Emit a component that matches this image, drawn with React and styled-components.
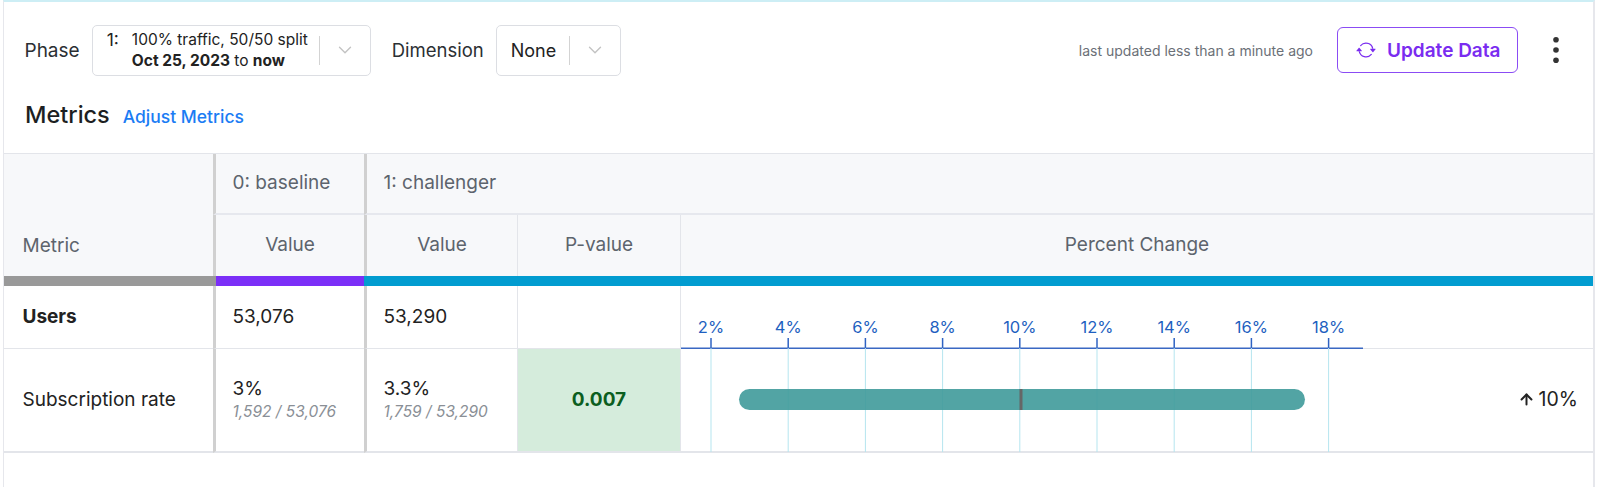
import React from "react";
import styled, { createGlobalStyle } from "styled-components";
import { ChevronDown, ArrowUp } from "lucide-react";
import { BsArrowRepeat } from "react-icons/bs";

const GlobalStyle = createGlobalStyle`
  * { box-sizing: border-box; }
  body {
    margin: 0;
    background: #fff;
    font-family: Inter, "Noto Sans", sans-serif;
    color: #222;
  }
`;

const Page = styled.div`
  padding-left: 3px;
  width: 1600px;
  height: 487px;
  overflow: hidden;
`;

const Card = styled.div`
  width: 1592px;
  height: 487px;
  border-left: 1px solid #e6e7ec;
  border-right: 2px solid #e6e7ec;
  border-top: 2px solid #cdeef5;
  background: #fff;
`;

const Toolbar = styled.div`
  display: flex;
  align-items: center;
  padding: 22.5px 0 0 20.5px;
  height: 74px;
`;

const Label = styled.span`
  font-size: ${(p) => p.$size || 19}px;
  color: #2b2f33;
  margin-right: 12px;
`;

const Select = styled.div`
  display: flex;
  align-items: center;
  height: 51px;
  width: ${(p) => p.$w}px;
  border: 1px solid #dcdee3;
  border-radius: 5px;
  padding-left: 14px;
  margin-right: ${(p) => p.$mr || 0}px;
`;

const SelectValue = styled.div`
  flex: 1;
  display: flex;
  align-items: ${(p) => (p.$top ? "flex-start" : "center")};
  font-size: 18px;
  color: #222;
`;

const PhaseNum = styled.span`
  font-size: 17.5px;
  margin-right: 13px;
  line-height: 21px;
`;

const PhaseLines = styled.div`
  display: flex;
  flex-direction: column;
  font-size: 15.5px;
  line-height: 21px;
  color: #222;
  white-space: nowrap;
  b { font-weight: 700; }
`;

const Sep = styled.div`
  width: 1px;
  height: 29px;
  background: #d3d3d3;
`;

const Chevron = styled.div`
  width: 50px;
  display: flex;
  justify-content: center;
  color: #c3c3c3;
`;

const Right = styled.div`
  margin-left: auto;
  display: flex;
  align-items: center;
  padding-right: 33px;
`;

const Updated = styled.span`
  font-size: 14px;
  color: #6b7077;
  margin-right: 24px;
`;

const UpdateButton = styled.button`
  display: flex;
  align-items: center;
  gap: 11px;
  height: 46px;
  width: 181px;
  padding: 0 0 0 18px;
  border: 1.5px solid #8b4cf4;
  border-radius: 6px;
  background: #fff;
  color: #7a2cf0;
  font-family: Inter, sans-serif;
  font-size: 19px;
  font-weight: 600;
  white-space: nowrap;
  cursor: pointer;
`;

const Kebab = styled.div`
  margin-left: 34px;
  display: flex;
  align-items: center;
`;

const MetricsHead = styled.div`
  display: flex;
  align-items: baseline;
  gap: 13px;
  padding: 24px 0 0 21px;
  height: 76.5px;
`;

const Title = styled.h2`
  margin: 0;
  font-size: 23.5px;
  line-height: 30px;
  font-weight: 500;
  color: #1d1f22;
`;

const LinkText = styled.a`
  font-size: 17.5px;
  color: #1b7cf4;
  font-weight: 500;
  text-decoration: none;
`;

const Table = styled.div`
  display: grid;
  grid-template-columns: 209px 151px 153px 163px 1fr;
  grid-template-rows: 61px 61.5px 9.5px 63px 104px;
  border-top: 1px solid #e3e5ea;
`;

const Th = styled.div`
  background: #f7f8fa;
  color: #5d646d;
  font-size: 19px;
  line-height: 24px;
  display: flex;
  align-items: ${(p) => (p.$bottom ? "flex-end" : "center")};
  justify-content: ${(p) => (p.$center ? "center" : "flex-start")};
  padding: ${(p) => (p.$bottom ? "0 0 18px 18.5px" : p.$center ? "0" : "0 0 0 16.5px")};
  grid-column: ${(p) => p.$col || "auto"};
  grid-row: ${(p) => p.$row || "auto"};
  border-left: ${(p) => (p.$thick ? "3px solid #d0d0d0" : p.$thin ? "1px solid #e3e5ea" : "none")};
  border-bottom: ${(p) => (p.$rule ? "2px solid #e6e8ee" : "none")};
`;

const ColorCell = styled.div`
  background: ${(p) => p.$c};
  grid-column: ${(p) => p.$col || "auto"};
  border-left: ${(p) => (p.$edge ? `3px solid ${p.$edge}` : "none")};
`;

const Td = styled.div`
  display: flex;
  flex-direction: column;
  justify-content: center;
  align-items: ${(p) => (p.$center ? "center" : "flex-start")};
  padding: ${(p) => (p.$center || p.$chart ? "0" : `0 0 0 ${p.$pl || 16.5}px`)};
  font-size: 19px;
  line-height: 23px;
  color: #222;
  font-weight: ${(p) => (p.$bold ? 700 : 400)};
  border-left: ${(p) => (p.$thick ? "3px solid #d0d0d0" : p.$thin ? "1px solid #e3e5ea" : "none")};
  border-bottom: ${(p) => p.$bb || 1}px solid #e3e5ea;
  background: ${(p) => p.$bg || "transparent"};
  position: relative;
`;

const Sub = styled.span`
  font-size: 15.5px;
  line-height: 20px;
  font-style: italic;
  color: #8a8f96;
  margin-top: 2px;
`;

const PValue = styled.span`
  font-size: 19px;
  font-weight: 700;
  color: #0c5e1f;
`;

const ChartRow = styled.div`
  display: flex;
  align-items: center;
  height: 100%;
  width: 100%;
`;

const Change = styled.div`
  margin-left: auto;
  padding-right: 15px;
  display: flex;
  align-items: center;
  gap: 4px;
  font-size: 19.5px;
  color: #222;
`;

const ticks = [2, 4, 6, 8, 10, 12, 14, 16, 18];
const x = (p) => 30 + (p - 2) * 38.6;

function Axis() {
  return (
    <svg width="683" height="63" style={{ display: "block", position: "absolute", left: 0, bottom: -1 }}>
      {ticks.map((t) => (
        <g key={t}>
          <text
            x={x(t)}
            y={47}
            textAnchor="middle"
            fontSize="16.5"
            fontFamily="Inter, sans-serif"
            fill="#1e5fc0"
          >
            {t}%
          </text>
          <line x1={x(t)} x2={x(t)} y1={52} y2={63} stroke="#2f63c3" strokeWidth="1.5" />
        </g>
      ))}
      <line x1={0} x2={682} y1={62.3} y2={62.3} stroke="#3a68c3" strokeWidth="1.4" />
    </svg>
  );
}

function Bar() {
  return (
    <svg width="683" height="104" style={{ display: "block", flexShrink: 0 }}>
      {ticks.map((t) => (
        <line key={t} x1={x(t)} x2={x(t)} y1={0} y2={104} stroke="#b5e5ef" strokeWidth="1" />
      ))}
      <rect x={58} y={41} width={566} height={21} rx={10.5} fill="#3f9a9a" fillOpacity="0.9" />
      <rect x={338.5} y={41} width={3} height={21} fill="#666" />
    </svg>
  );
}

export default function App() {
  return (
    <>
      <GlobalStyle />
      <Page>
        <Card>
          <Toolbar>
            <Label>Phase</Label>
            <Select $w={279} $mr={21}>
              <SelectValue $top>
                <PhaseNum>1:</PhaseNum>
                <PhaseLines>
                  <span>100% traffic, 50/50 split</span>
                  <span>
                    <b>Oct 25, 2023</b> to <b>now</b>
                  </span>
                </PhaseLines>
              </SelectValue>
              <Sep />
              <Chevron>
                <ChevronDown size={22} strokeWidth={1.5} />
              </Chevron>
            </Select>
            <Label $size={18.5}>Dimension</Label>
            <Select $w={125}>
              <SelectValue>None</SelectValue>
              <Sep />
              <Chevron>
                <ChevronDown size={22} strokeWidth={1.5} />
              </Chevron>
            </Select>
            <Right>
              <Updated>last updated less than a minute ago</Updated>
              <UpdateButton>
                <BsArrowRepeat size={20} />
                Update Data
              </UpdateButton>
              <Kebab>
                <svg width="8" height="28" viewBox="0 0 8 28">
                  <circle cx="4" cy="3.8" r="2.8" fill="#333" />
                  <circle cx="4" cy="14" r="2.8" fill="#333" />
                  <circle cx="4" cy="24.2" r="2.8" fill="#333" />
                </svg>
              </Kebab>
            </Right>
          </Toolbar>
          <MetricsHead>
            <Title>Metrics</Title>
            <LinkText href="#">Adjust Metrics</LinkText>
          </MetricsHead>
          <Table>
            <Th $bottom $col="1" $row="1 / span 2">Metric</Th>
            <Th $col="2" $row="1" $thick $rule>0: baseline</Th>
            <Th $col="3 / span 3" $row="1" $thick $rule>1: challenger</Th>
            <Th $col="2" $row="2" $thick $center>Value</Th>
            <Th $col="3" $row="2" $thick $center>Value</Th>
            <Th $col="4" $row="2" $thin $center>P-value</Th>
            <Th $col="5" $row="2" $thin $center>Percent Change</Th>

            <ColorCell $c="#999999" />
            <ColorCell $c="#7b2ff7" $edge="#999999" />
            <ColorCell $c="#029cd0" $edge="#029cd0" $col="3 / span 3" />

            <Td $bold $pl={18.5}>Users</Td>
            <Td $thick>53,076</Td>
            <Td $thick>53,290</Td>
            <Td $thin />
            <Td $thin $chart>
              <Axis />
            </Td>

            <Td $pl={18.5} $bb={2}>Subscription rate</Td>
            <Td $thick $bb={2}>
              <span>3%</span>
              <Sub>1,592 / 53,076</Sub>
            </Td>
            <Td $thick $bb={2}>
              <span>3.3%</span>
              <Sub>1,759 / 53,290</Sub>
            </Td>
            <Td $thin $center $bb={2} $bg="#d5ecdc">
              <PValue>0.007</PValue>
            </Td>
            <Td $thin $chart $bb={2}>
              <ChartRow>
                <Bar />
                <Change>
                  <ArrowUp size={17} strokeWidth={2.8} />
                  10%
                </Change>
              </ChartRow>
            </Td>
          </Table>
        </Card>
      </Page>
    </>
  );
}
